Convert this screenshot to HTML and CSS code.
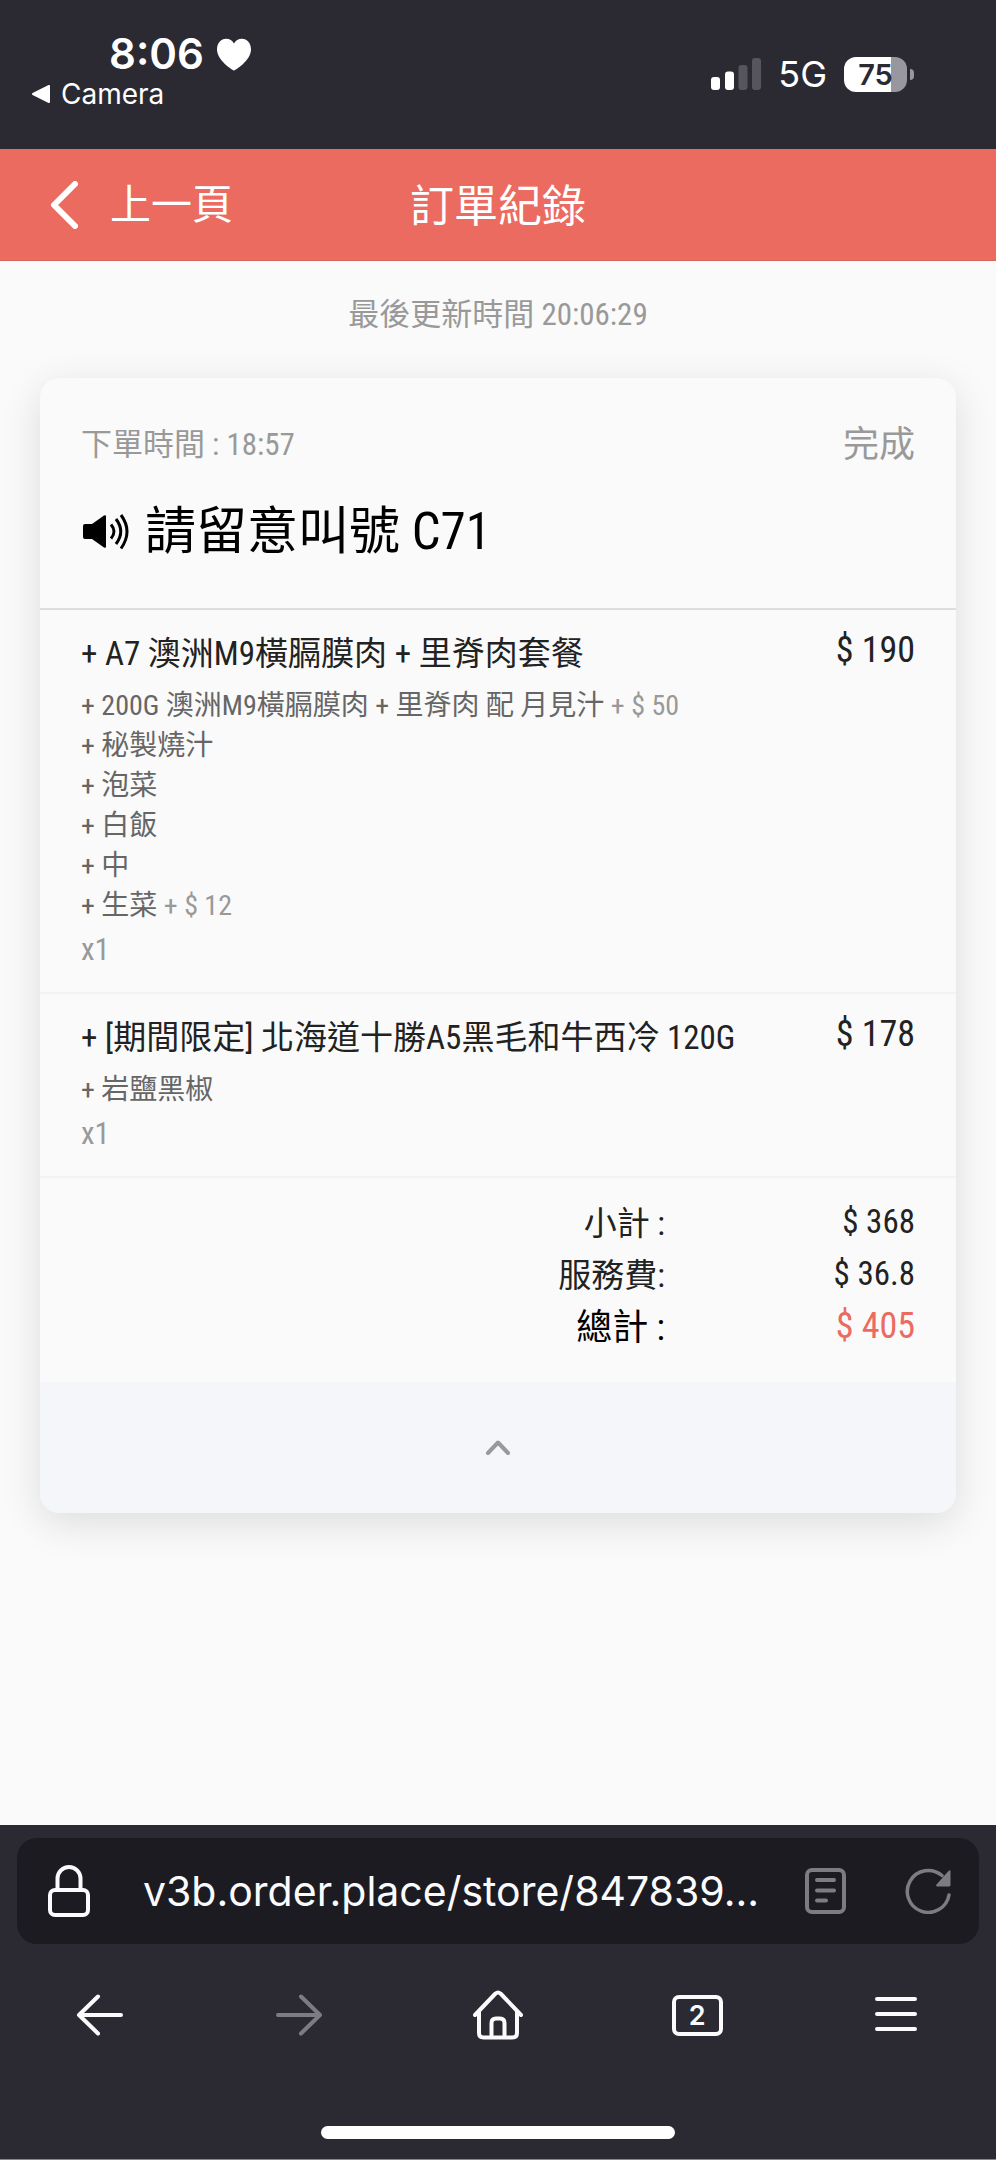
FILE: index.html
```html
<!DOCTYPE html>
<html lang="zh-Hant">
<head>
<meta charset="utf-8">
<meta name="viewport" content="width=device-width, initial-scale=1">
<title>訂單紀錄</title>
<link rel="stylesheet" href="styles.css">
</head>
<body>
<div class="status-bar">
  <div class="status-left">
    <div class="clock">8:06
      <svg class="heart" viewBox="0 0 36 33" width="36" height="33" aria-hidden="true"><path d="M18 32.5C17 32.500 1 22.500 1 11.500C1 5.200 5 .8 10 .8C13.600 .8 16.500 2.600 18 5.600C19.500 2.600 22.400 .8 26 .8C31 .8 35 5.200 35 11.500C35 22.500 19 32.500 18 32.500Z" fill="currentColor"/></svg>
    </div>
    <a class="back-app" href="#camera">
      <svg viewBox="0 0 18 18" width="18" height="18" aria-hidden="true"><path d="M1 9L17 1V17Z" fill="currentColor" stroke="currentColor" stroke-width="2" stroke-linejoin="round"/></svg>
      Camera</a>
  </div>
  <div class="status-right">
    <svg viewBox="0 0 50 32" width="50" height="32" aria-hidden="true"><g fill="#fff"><rect x="0" y="19" width="9" height="13" rx="3"/><rect x="14" y="13.500" width="9" height="18.500" rx="3"/></g><g fill="#55555b"><rect x="27.500" y="7" width="9" height="25" rx="3"/><rect x="41" y="0" width="9" height="32" rx="3"/></g></svg>
    <span class="network">5G</span>
    <span class="battery"><span class="battery-level">75</span></span>
  </div>
</div>

<header class="page-header">
  <button class="back" type="button">
    <svg viewBox="0 0 28 48" width="28" height="48" aria-hidden="true"><path d="M25 3L4 24L25 45" fill="none" stroke="currentColor" stroke-width="6" stroke-linecap="round" stroke-linejoin="round"/></svg>
    上一頁</button>
  <h1 class="page-title">訂單紀錄</h1>
</header>

<main class="content">
  <p class="updated">最後更新時間 20:06:29</p>
  <article class="card">
    <div class="card-head">
      <div class="card-meta"><span class="placed">下單時間 : 18:57</span><span class="state">完成</span></div>
      <h2 class="call">
        <svg viewBox="0 0 46 36" width="46" height="36" aria-hidden="true"><path d="M2 10H9L21 1.500Q23 .5 23 2.500V32.500Q23 34.500 21 33.500L9 25H2Q0 25 0 23V12Q0 10 2 10Z" fill="currentColor"/><g fill="none" stroke="currentColor" stroke-width="3"><path d="M28 10.500Q34 17.500 28 24.500"/><path d="M33 5Q42.500 17.500 33 30"/><path d="M38 1Q50 17.500 38 34.500"/></g></svg>
        請留意叫號 C71</h2>
    </div>
    <section class="item">
      <div class="item-info">
        <h3 class="item-name">+ A7 澳洲M9橫膈膜肉 + 里脊肉套餐</h3>
        <ul class="options">
          <li>+ 200G 澳洲M9橫膈膜肉 + 里脊肉 配 月見汁 <span class="extra">+ $ 50</span></li>
          <li>+ 秘製燒汁</li>
          <li>+ 泡菜</li>
          <li>+ 白飯</li>
          <li>+ 中</li>
          <li>+ 生菜 <span class="extra">+ $ 12</span></li>
        </ul>
        <p class="qty">x1</p>
      </div>
      <p class="price">$ 190</p>
    </section>
    <section class="item">
      <div class="item-info">
        <h3 class="item-name">+ [期間限定] 北海道十勝A5黑毛和牛西冷 120G</h3>
        <ul class="options">
          <li>+ 岩鹽黑椒</li>
        </ul>
        <p class="qty">x1</p>
      </div>
      <p class="price">$ 178</p>
    </section>
    <dl class="totals">
      <dt>小計 :</dt><dd>$ 368</dd>
      <dt>服務費:</dt><dd>$ 36.8</dd>
      <dt class="grand-label">總計 :</dt><dd class="grand">$ 405</dd>
    </dl>
    <button class="collapse" type="button" aria-label="收起">
      <svg viewBox="0 0 26 18" width="26" height="18" aria-hidden="true"><path d="M3 14L13 3.500L23 14" fill="none" stroke="currentColor" stroke-width="4" stroke-linecap="round" stroke-linejoin="round"/></svg>
    </button>
  </article>
</main>

<footer class="browser">
  <div class="address">
    <svg viewBox="0 0 42 52" width="42" height="52" aria-hidden="true"><g fill="none" stroke="#fbfbfe" stroke-width="4"><rect x="2" y="25" width="38" height="25" rx="5"/><path d="M9.500 25V13.500a11.500 11.500 0 0 1 23 0V25"/></g></svg>
    <input class="url" type="text" value="v3b.order.place/store/847839..." aria-label="網址" readonly>
    <button class="tool" type="button" aria-label="閱讀模式"><svg viewBox="0 0 42 46" width="42" height="46" aria-hidden="true"><g fill="none" stroke="currentColor" stroke-width="4" stroke-linecap="round"><rect x="2" y="2" width="37" height="42" rx="5"/><path d="M12 12H29M12 22.500H29M12 32.500H21"/></g></svg></button>
    <button class="tool" type="button" aria-label="重新整理"><svg viewBox="0 0 46 46" width="46" height="46" aria-hidden="true"><path d="M44 27A21 21 0 1 1 37 7.500" fill="none" stroke="currentColor" stroke-width="3.500" stroke-linecap="round"/><path d="M45.500 3.500V17Q45.500 18.500 44 18.500H32Q30.500 18 31.500 16.500L43.500 3Q45.500 1.500 45.500 3.500Z" fill="currentColor"/></svg></button>
  </div>
  <nav class="nav">
    <button type="button" aria-label="上一頁"><svg viewBox="0 0 48 48" width="48" height="48" aria-hidden="true"><path d="M45 24H3M22 5.500L3 24L22 42.500" fill="none" stroke="currentColor" stroke-width="4" stroke-linecap="round" stroke-linejoin="round"/></svg></button>
    <button type="button" aria-label="下一頁" disabled><svg viewBox="0 0 48 48" width="48" height="48" aria-hidden="true"><path d="M3 24H45M26 5.500L45 24L26 42.500" fill="none" stroke="currentColor" stroke-width="4" stroke-linecap="round" stroke-linejoin="round"/></svg></button>
    <button type="button" aria-label="首頁"><svg viewBox="0 0 50 50" width="50" height="50" aria-hidden="true"><path d="M2 25L22.500 3.500Q25 1.500 27.500 3.500L48 25M6 22V43Q6 47.500 10.500 47.500H39.500Q44 47.500 44 43V22M18.500 47V33Q18.500 28.500 23 28.500H27Q31.500 28.500 31.500 33V47" fill="none" stroke="currentColor" stroke-width="4" stroke-linecap="round" stroke-linejoin="round"/></svg></button>
    <button type="button" aria-label="分頁"><span class="tabs">2</span></button>
    <button type="button" aria-label="選單"><svg viewBox="0 0 42 42" width="42" height="42" aria-hidden="true"><path d="M2 5H40M2 20H40M2 35H40" fill="none" stroke="currentColor" stroke-width="4" stroke-linecap="round"/></svg></button>
  </nav>
  <div class="home-indicator"></div>
</footer>
</body>
</html>
```
FILE: styles.css
```css
* { box-sizing: border-box; }

body {
  margin: 0;
  min-height: 100vh;
  display: flex;
  flex-direction: column;
  background: #fafafa;
  color: #222;
  font-family: "Roboto Condensed", "Liberation Sans Narrow", Roboto, "Noto Sans CJK TC", sans-serif;
  font-weight: 400;
}

h1, h2, h3, p, ul, dl, dd { margin: 0; padding: 0; font-weight: 400; }
ul { list-style: none; }
svg { display: block; flex: none; }
button { border: 0; padding: 0; background: none; color: inherit; font: inherit; cursor: pointer; }

/* Device status bar */
.status-bar {
  display: flex;
  justify-content: space-between;
  padding: 28px 89px 36px 32px;
  background: #2b2a33;
  color: #fff;
  font-family: Inter, sans-serif;
}
.clock {
  display: flex;
  align-items: center;
  gap: 12px;
  margin-left: 77px;
  font-size: 42px;
  line-height: 52px;
  font-weight: 600;
}
.back-app {
  display: flex;
  align-items: center;
  gap: 11px;
  color: inherit;
  text-decoration: none;
  font-size: 28px;
  line-height: 28px;
}
.status-right { display: flex; align-items: center; height: 92px; margin-bottom: -7px; gap: 17px; }
.network { font-size: 36px; line-height: 40px; }
.battery {
  position: relative;
  width: 63px;
  height: 35px;
  border-radius: 12px;
  background: linear-gradient(to right, #fff 75%, #98979d 75%);
  color: #2b2a33;
}
.battery-level {
  display: block;
  font-size: 29px;
  line-height: 35px;
  font-weight: 600;
  text-align: center;
}
.battery::after {
  content: "";
  position: absolute;
  left: 66px;
  top: 12px;
  width: 4px;
  height: 11px;
  border-radius: 0 4px 4px 0;
  background: #98979d;
}

/* Page header */
.page-header {
  display: grid;
  grid-template-columns: 1fr auto 1fr;
  align-items: center;
  height: 112px;
  padding: 0 50px;
  border-bottom: 1px solid #d4665c;
  background: #ec6b60;
  color: #fff;
}
.back {
  display: flex;
  align-items: center;
  gap: 32px;
  font-size: 41px;
  line-height: 56px;
}
.page-title { padding-top: 4px; font-size: 44px; line-height: 60px; }

/* Order card */
.content { flex: 1; padding: 32px 40px; }
.updated {
  margin-bottom: 42px;
  color: #999;
  font-size: 31px;
  line-height: 43px;
  text-align: center;
}
.card {
  border-radius: 20px;
  overflow: hidden;
  background: #fafafa;
  box-shadow: 0 10px 40px rgba(0, 0, 0, 0.12);
}
.card-head { padding: 42px 41px 38px; border-bottom: 2px solid #ddd; }
.card-meta {
  display: flex;
  justify-content: space-between;
  align-items: center;
  color: #999;
  line-height: 50px;
}
.placed { font-size: 31px; }
.state { font-size: 36px; }
.call {
  display: flex;
  align-items: center;
  gap: 16px;
  margin-top: 24px;
  padding-left: 2px;
  color: #000;
  font-size: 51px;
  line-height: 76px;
}
.item {
  display: flex;
  justify-content: space-between;
  padding: 20px 41px;
  border-bottom: 2px solid #f3f3f3;
}
.item-name { margin-bottom: 8px; font-size: 33px; line-height: 48px; }
.options { margin-bottom: 2px; color: #666; font-size: 28px; line-height: 40px; }
.extra, .qty { color: #999; }
.qty { font-size: 31px; line-height: 44px; }
.price { font-size: 36px; line-height: 40px; }
.totals {
  display: grid;
  grid-template-columns: 1fr 250px;
  padding: 20px 41px 28px;
  font-size: 33px;
  line-height: 52px;
  text-align: right;
}
.totals dd { line-height: 48px; }
.totals .grand-label { color: #000; font-size: 36px; }
.totals .grand { color: #ec6b60; font-size: 36px; }
.collapse {
  display: flex;
  align-items: center;
  justify-content: center;
  width: 100%;
  height: 131px;
  background: #f4f6fa;
  color: #999;
}

/* Browser chrome */
.browser {
  padding: 13px 17px 20px;
  background: #2b2a33;
  color: #fbfbfe;
  border-bottom: 1px solid #88878d;
  font-family: Inter, sans-serif;
}
.address {
  display: flex;
  align-items: center;
  height: 106px;
  padding: 0 28px 0 31px;
  border-radius: 20px;
  background: #1c1b22;
}
.url {
  flex: 1;
  min-width: 0;
  margin: 0 30px 0 53px;
  padding: 0;
  border: 0;
  outline: 0;
  background: none;
  color: inherit;
  font: 400 41px/52px Inter, sans-serif;
}
.tool { color: #7d7c82; }
.tool + .tool { margin-left: 58px; }
.nav {
  display: grid;
  grid-template-columns: repeat(5, 1fr);
  height: 142px;
  margin: 0 -17px;
}
.nav button { display: flex; align-items: center; justify-content: center; }
.nav button:disabled { color: #7d7c82; }
.tabs {
  width: 51px;
  height: 41px;
  border: 4px solid;
  border-radius: 7px;
  font-size: 27px;
  line-height: 33px;
  font-weight: 600;
  text-align: center;
}
.home-indicator {
  width: 354px;
  height: 13px;
  margin: 40px auto 0;
  border-radius: 7px;
  background: #fff;
}
```
